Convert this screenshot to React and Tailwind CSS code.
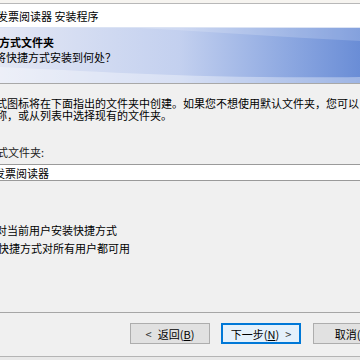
import React from "react";

export default function App() {
  return (
    <div
      className="w-[360px] h-[360px] overflow-hidden bg-[#f0f0f0] text-[11px] text-black"
      style={{ fontFamily: '"Noto Sans CJK SC", "Noto Sans", sans-serif' }}
    >
      {/* window top edge */}
      <div className="h-[4px] bg-[#f6f4f0] border-b border-[#b8b8b8]" />

      {/* title bar */}
      <div className="h-[23px] bg-white flex items-center whitespace-nowrap">
        <span className="ml-[-3px] leading-[14px]">发票阅读器 安装程序</span>
      </div>

      {/* header band */}
      <div className="relative h-[57px] border-b border-[#a8a8a8] bg-linear-to-r from-[#e3e7f4] via-[#c3d0ef] to-[#6a8dd6] overflow-hidden">
        <svg className="absolute inset-0" width="360" height="56" viewBox="0 0 360 56">
          <path d="M0 40 C 90 44, 200 52, 360 50 L 360 56 L 0 56 Z" fill="#ffffff" opacity="0.35" />
          <path d="M120 0 C 200 4, 280 10, 360 14 L 360 0 Z" fill="#ffffff" opacity="0.18" />
          <rect x="0" y="0" width="360" height="1" fill="#dbe3f4" />
        </svg>
        <div className="relative pt-[8px] whitespace-nowrap">
          <div className="leading-[14px] font-bold ml-[-1px]">方式文件夹</div>
          <div className="leading-[14px] mt-[1px] ml-[-5px]">将快捷方式安装到何处？</div>
        </div>
      </div>

      {/* body */}
      <div className="h-[228px] pt-[13px] whitespace-nowrap">
        <div className="leading-[12px] ml-[-4px]">式图标将在下面指出的文件夹中创建。如果您不想使用默认文件夹，您可以</div>
        <div className="leading-[12px] ml-[-4px]">称，或从列表中选择现有的文件夹。</div>

        <div className="leading-[14px] mt-[24px] ml-[-3px] text-[#222]">式文件夹:</div>

        <div className="mt-[5px] h-[17px] bg-white border-y border-[#9a9a9a] flex items-center">
          <span className="ml-[-6px] leading-[14px]">发票阅读器</span>
        </div>

        <div className="mt-[40px] leading-[18px] ml-[-4px]">对当前用户安装快捷方式</div>
        <div className="leading-[18px] ml-[-2px]">快捷方式对所有用户都可用</div>
      </div>

      {/* separator + buttons */}
      <div className="border-t border-[#a6a6a6] h-[44px] pt-[10px] flex gap-[11px] pl-[130px] whitespace-nowrap">
        <button className="w-[80px] h-[21px] shrink-0 bg-[#e1e1e1] border border-[#adadad] flex items-center justify-center leading-[14px]">
          <span className="mr-[6px] text-[#333]">&lt;</span>
          返回(<span className="underline">B</span>)
        </button>
        <button className="w-[80px] h-[21px] shrink-0 bg-[#e5f1fb] border border-[#0078d7] shadow-[inset_0_0_0_1px_#0078d7] flex items-center justify-center leading-[14px]">
          下一步(<span className="underline">N</span>)
          <span className="ml-[6px] text-[#333]">&gt;</span>
        </button>
        <button className="w-[80px] h-[21px] shrink-0 ml-[1px] bg-[#e1e1e1] border border-[#adadad] flex items-center justify-center leading-[14px]">
          取消(<span className="underline">C</span>)
        </button>
      </div>
      <div className="border-t border-[#b4b4b4] h-[4px] bg-[#e8e8e8]" />
    </div>
  );
}
